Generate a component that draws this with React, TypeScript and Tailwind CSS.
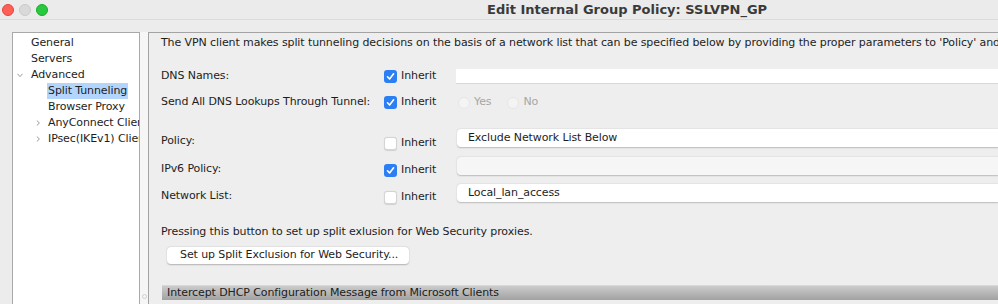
import React from 'react';

const font = { fontFamily: '"DejaVu Sans", "Liberation Sans", sans-serif' };

function Check({ checked }: { checked: boolean }) {
  if (checked) {
    return (
      <span className="w-[13px] h-[13px] rounded-[3px] bg-[#2b7ef3] flex items-center justify-center flex-shrink-0">
        <svg width="9" height="9" viewBox="0 0 9 9">
          <polyline points="1.5,4.8 3.6,7 7.6,1.8" fill="none" stroke="white" strokeWidth="1.6" strokeLinecap="round" strokeLinejoin="round" />
        </svg>
      </span>
    );
  }
  return <span className="w-[13px] h-[13px] rounded-[3px] bg-white border border-[#d4d4d4] shadow-[0_0.5px_1px_rgba(0,0,0,0.12)] flex-shrink-0" />;
}

function Inherit({ checked }: { checked: boolean }) {
  return (
    <div className="w-[73px] flex items-center gap-[4px] pl-[1px]">
      <Check checked={checked} />
      <span>Inherit</span>
    </div>
  );
}

function Radio({ label }: { label: string }) {
  return (
    <div className="flex items-center gap-[4px] text-[#a6a6a6]">
      <span className="w-[12px] h-[12px] rounded-full bg-[#f4f4f4] border border-[#e6e6e6]" />
      <span>{label}</span>
    </div>
  );
}

function Dropdown({ value, disabled = false }: { value?: string; disabled?: boolean }) {
  return (
    <div
      className={
        'flex-1 h-[18px] ml-[1px] rounded-l-[4px] flex items-center pl-[11px] shadow-[0_0.5px_1.5px_rgba(0,0,0,0.22)] ' +
        (disabled ? 'bg-[#f6f6f6]' : 'bg-white')
      }
    >
      {value}
    </div>
  );
}

function TreeItem({ label, indent, chevron, selected }: { label: string; indent: number; chevron?: 'down' | 'right'; selected?: boolean }) {
  return (
    <div className="h-[16px] flex items-center whitespace-nowrap relative" style={{ paddingLeft: indent }}>
      {chevron === 'down' && (
        <svg className="absolute left-[4px] top-[6px]" width="6" height="5" viewBox="0 0 6 5">
          <polyline points="0.5,0.8 3,3.6 5.5,0.8" fill="none" stroke="#9a9a9a" strokeWidth="1" />
        </svg>
      )}
      {chevron === 'right' && (
        <svg className="absolute left-[23px] top-[5px]" width="4" height="6" viewBox="0 0 4 6">
          <polyline points="0.8,0.5 3.4,3 0.8,5.5" fill="none" stroke="#9a9a9a" strokeWidth="1" />
        </svg>
      )}
      <span className={selected ? 'bg-[#b3d5fd] px-[1px] -ml-[1px] leading-[16px]' : ''}>{label}</span>
    </div>
  );
}

export default function App() {
  return (
    <div className="w-[998px] h-[304px] overflow-hidden bg-[#ececec] text-[11px] tracking-[-0.1px] text-[#1d1d1d]" style={font}>
      {/* title bar */}
      <div className="h-[20px] flex items-center border-b border-[#dadada] bg-[#ebebeb]">
        <div className="flex items-center gap-[5px] pl-[2px]">
          <span className="w-[12px] h-[12px] rounded-full bg-[#fe5f57] border border-[#e2463f]" />
          <span className="w-[12px] h-[12px] rounded-full bg-[#d9d9d9] border border-[#cacaca]" />
          <span className="w-[12px] h-[12px] rounded-full bg-[#28c840] border border-[#1aab29]" />
        </div>
        <span className="ml-[439px] font-bold text-[13px] tracking-normal text-[#3a3a3a]">Edit Internal Group Policy: SSLVPN_GP</span>
      </div>

      <div className="flex pt-[12px] h-[284px]">
        {/* tree */}
        <div className="ml-[12px] w-[128px] border border-[#a9a9a9] border-b-0 bg-white pt-[2px] overflow-hidden">
          <TreeItem label="General" indent={18} />
          <TreeItem label="Servers" indent={18} />
          <TreeItem label="Advanced" indent={18} chevron="down" />
          <TreeItem label="Split Tunneling" indent={35} selected />
          <TreeItem label="Browser Proxy" indent={35} />
          <TreeItem label="AnyConnect Client" indent={35} chevron="right" />
          <TreeItem label="IPsec(IKEv1) Client" indent={35} chevron="right" />
        </div>
        <div className="w-[8px] bg-[#f6f6f6] flex flex-col justify-end items-center pb-[5px]">
          <span className="w-[5px] h-[5px] rounded-full border border-[#d0d0d0]" />
        </div>

        {/* settings panel */}
        <div className="flex-1 min-w-0 border-l border-t border-[#a3a3a3] bg-[#eeeeee] pl-[12px] overflow-hidden">
          <div className="pt-[2px] h-[18px] leading-[16px] whitespace-nowrap">
            The VPN client makes split tunneling decisions on the basis of a network list that can be specified below by providing the proper parameters to 'Policy' and 'Network List' fields.
          </div>

          <div className="mt-[17px] h-[17px] flex items-center">
            <div className="w-[222px]">DNS Names:</div>
            <Inherit checked />
            <div className="flex-1 h-[15px] bg-white border-b border-[#d8d8d8]" />
          </div>

          <div className="mt-[9px] h-[17px] flex items-center">
            <div className="w-[222px]">Send All DNS Lookups Through Tunnel:</div>
            <Inherit checked />
            <div className="flex items-center gap-[16px] pl-[2px]">
              <Radio label="Yes" />
              <Radio label="No" />
            </div>
          </div>

          <div className="mt-[18px] h-[18px] flex items-start">
            <div className="w-[222px] mt-[4px]">Policy:</div>
            <div className="mt-[6px]"><Inherit checked={false} /></div>
            <Dropdown value="Exclude Network List Below" />
          </div>

          <div className="mt-[10px] h-[18px] flex items-start">
            <div className="w-[222px] mt-[4px]">IPv6 Policy:</div>
            <div className="mt-[5px]"><Inherit checked /></div>
            <Dropdown disabled />
          </div>

          <div className="mt-[9px] h-[18px] flex items-start">
            <div className="w-[222px] mt-[4px]">Network List:</div>
            <div className="mt-[5px]"><Inherit checked={false} /></div>
            <Dropdown value="Local_lan_access" />
          </div>

          <div className="mt-[22px] h-[16px] leading-[16px]">Pressing this button to set up split exlusion for Web Security proxies.</div>

          <div className="mt-[7px] ml-[6px] w-[242px] h-[17px] bg-white rounded-[4px] flex items-center pl-[13px] shadow-[0_0.5px_1.5px_rgba(0,0,0,0.25)]">
            Set up Split Exclusion for Web Security...
          </div>

          <div className="mt-[21px] ml-[1px] h-[15px] flex items-center pl-[5px] bg-gradient-to-b from-[#cbcbcb] to-[#a2a2a2] border-t border-[#d8d8d8] text-[#202020]">
            Intercept DHCP Configuration Message from Microsoft Clients
          </div>
        </div>
      </div>
    </div>
  );
}
